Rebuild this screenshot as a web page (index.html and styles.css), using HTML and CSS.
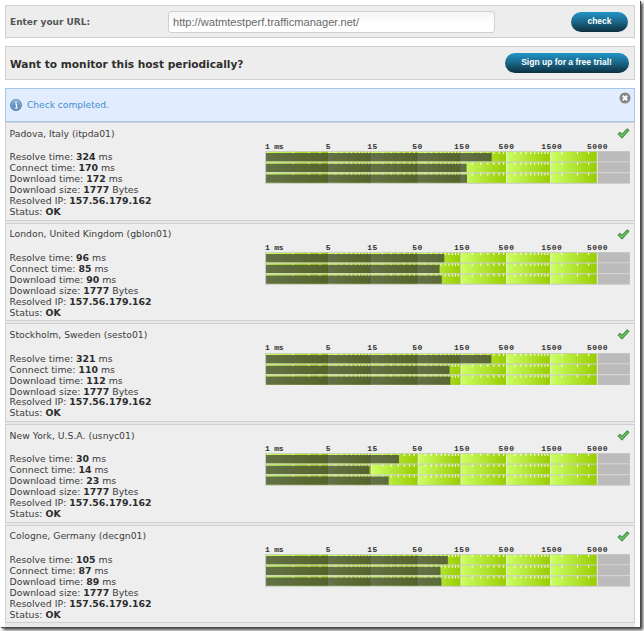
FILE: index.html
```html
<!DOCTYPE html>
<html lang="en">
<head>
<meta charset="utf-8">
<title>Website check</title>
<link rel="stylesheet" href="styles.css">
</head>
<body>
<svg class="defs" aria-hidden="true">
  <defs>
    <linearGradient id="lime"><stop offset="0" stop-color="#ccff66"/><stop offset="1" stop-color="#99cc00"/></linearGradient>
    <linearGradient id="blue" x2="0" y2="1"><stop offset="0" stop-color="#8ab0d8"/><stop offset="1" stop-color="#4478b0"/></linearGradient>
    <symbol id="lane" viewBox="0 0 365 10.8">
      <rect width="365" height="10.8" fill="#bbb"/>
      <g fill="url(#lime)"><rect x="1" width="62.6" height="10.8"/><rect x="63.6" width="42.8" height="10.8"/><rect x="106.4" width="46.8" height="10.8"/><rect x="153.2" width="42.8" height="10.8"/><rect x="196" width="45.5" height="10.8"/><rect x="241.5" width="44" height="10.8"/><rect x="285.5" width="46.5" height="10.8"/></g>
      <path transform="translate(1 0)" d="M27 0v3M42.7 0v3M53.9 0v3M69.7 0v3M75.7 0v3M80.9 0v3M85.5 0v3M89.6 0v3M93.3 0v3M96.7 0v3M99.8 0v3M102.7 0v3M116.6 0v3M125.3 0v3M132.3 0v3M138.3 0v3M143.5 0v3M148.1 0v3M159.3 0v3M165.3 0v3M170.5 0v3M175.1 0v3M179.2 0v3M182.9 0v3M186.3 0v3M189.4 0v3M192.3 0v3M206.2 0v3M214.9 0v3M221.9 0v3M227.9 0v3M233.1 0v3M237.7 0v3M248.9 0v3M254.9 0v3M260.1 0v3M264.7 0v3M268.8 0v3M272.5 0v3M275.9 0v3M279 0v3M281.9 0v3M295.8 0v3M311.5 0v3M322.7 0v3" stroke="#fbfff0" stroke-width="1.1"/>
      <path d="M63.6 0v10.8M106.4 0v10.8M153.2 0v10.8M196 0v10.8M241.5 0v10.8M285.5 0v10.8M332.3 0v10.8" stroke="#e8eedc" stroke-width="1"/>
      <path d="M0 .4h365M.5 0v10.8" stroke="#c8c8c8" stroke-width=".9"/>
    </symbol>
    <symbol id="tick" viewBox="0 0 13 11"><path d="M1.2 6.1 3 4.4l2 2L10.3 1l1.5 1.5L5 9.8z" fill="#78c66c" stroke="#3f9440" stroke-width="1.1" stroke-linejoin="round"/></symbol>
  </defs>
</svg>
<main class="page">
  <form class="bar">
    <label class="bar-label" for="url">Enter your URL:</label>
    <input class="url" id="url" type="text" value="http://watmtestperf.trafficmanager.net/">
    <button class="pill pill-check" type="button">check</button>
  </form>
  <section class="bar bar-trial">
    <h2 class="bar-title">Want to monitor this host periodically?</h2>
    <button class="pill pill-trial" type="button">Sign up for a free trial!</button>
  </section>
  <section class="notice">
    <svg class="info" viewBox="0 0 12 12"><circle cx="6" cy="6" r="5.6" fill="url(#blue)" stroke="#4a78ab" stroke-width=".7"/><circle cx="6" cy="6" r="4.4" fill="none" stroke="#a8c5e2" stroke-width=".5"/><path d="M5 5h1.5v4M4.8 9h3M6 2.5v1.4" fill="none" stroke="#fff" stroke-width="1.2"/></svg>
    <span>Check completed.</span>
    <svg class="close" viewBox="0 0 12 12"><circle cx="6" cy="6" r="5.5" fill="#858585"/><path d="m3.8 3.8 4.4 4.4m0-4.4L3.8 8.2" stroke="#fff" stroke-width="2"/></svg>
  </section>
  <section class="results">
    <article class="result">
      <div class="facts"><h3>Padova, Italy (itpda01)</h3><p>Resolve time: <b>324</b> ms</p><p>Connect time: <b>170</b> ms</p><p>Download time: <b>172</b> ms</p><p>Download size: <b>1777</b> Bytes</p><p>Resolved IP: <b>157.56.179.162</b></p><p>Status: <b>OK</b></p></div>
      <div class="chart"><svg class="tick"><use href="#tick"/></svg><div class="scale"><span>1 ms</span><span>5</span><span>15</span><span>50</span><span>150</span><span>500</span><span>1500</span><span>5000</span></div>
        <svg class="plot" viewBox="0 0 365 32.7"><use href="#lane" width="365" height="10.8"/><use href="#lane" y="10.8" width="365" height="10.8"/><use href="#lane" y="21.6" width="365" height="10.8"/><path class="edge" d="M0 32.3h365"/><path class="time" d="M1 2h225.7v8.2H1zM1 12.8h200.6V21H1zM1 23.6h201v8.2H1z"/></svg></div>
    </article>
    <article class="result">
      <div class="facts"><h3>London, United Kingdom (gblon01)</h3><p>Resolve time: <b>96</b> ms</p><p>Connect time: <b>85</b> ms</p><p>Download time: <b>90</b> ms</p><p>Download size: <b>1777</b> Bytes</p><p>Resolved IP: <b>157.56.179.162</b></p><p>Status: <b>OK</b></p></div>
      <div class="chart"><svg class="tick"><use href="#tick"/></svg><div class="scale"><span>1 ms</span><span>5</span><span>15</span><span>50</span><span>150</span><span>500</span><span>1500</span><span>5000</span></div>
        <svg class="plot" viewBox="0 0 365 32.7"><use href="#lane" width="365" height="10.8"/><use href="#lane" y="10.8" width="365" height="10.8"/><use href="#lane" y="21.6" width="365" height="10.8"/><path class="edge" d="M0 32.3h365"/><path class="time" d="M1 2h178.3v8.2H1zM1 12.8h173.6V21H1zM1 23.6h175.8v8.2H1z"/></svg></div>
    </article>
    <article class="result">
      <div class="facts"><h3>Stockholm, Sweden (sesto01)</h3><p>Resolve time: <b>321</b> ms</p><p>Connect time: <b>110</b> ms</p><p>Download time: <b>112</b> ms</p><p>Download size: <b>1777</b> Bytes</p><p>Resolved IP: <b>157.56.179.162</b></p><p>Status: <b>OK</b></p></div>
      <div class="chart"><svg class="tick"><use href="#tick"/></svg><div class="scale"><span>1 ms</span><span>5</span><span>15</span><span>50</span><span>150</span><span>500</span><span>1500</span><span>5000</span></div>
        <svg class="plot" viewBox="0 0 365 32.7"><use href="#lane" width="365" height="10.8"/><use href="#lane" y="10.8" width="365" height="10.8"/><use href="#lane" y="21.6" width="365" height="10.8"/><path class="edge" d="M0 32.3h365"/><path class="time" d="M1 2h225.3v8.2H1zM1 12.8h183.6V21H1zM1 23.6h184.3v8.2H1z"/></svg></div>
    </article>
    <article class="result">
      <div class="facts"><h3>New York, U.S.A. (usnyc01)</h3><p>Resolve time: <b>30</b> ms</p><p>Connect time: <b>14</b> ms</p><p>Download time: <b>23</b> ms</p><p>Download size: <b>1777</b> Bytes</p><p>Resolved IP: <b>157.56.179.162</b></p><p>Status: <b>OK</b></p></div>
      <div class="chart"><svg class="tick"><use href="#tick"/></svg><div class="scale"><span>1 ms</span><span>5</span><span>15</span><span>50</span><span>150</span><span>500</span><span>1500</span><span>5000</span></div>
        <svg class="plot" viewBox="0 0 365 32.7"><use href="#lane" width="365" height="10.8"/><use href="#lane" y="10.8" width="365" height="10.8"/><use href="#lane" y="21.6" width="365" height="10.8"/><path class="edge" d="M0 32.3h365"/><path class="time" d="M1 2h133v8.2H1zM1 12.8h103.4V21H1zM1 23.6h122.7v8.2H1z"/></svg></div>
    </article>
    <article class="result">
      <div class="facts"><h3>Cologne, Germany (decgn01)</h3><p>Resolve time: <b>105</b> ms</p><p>Connect time: <b>87</b> ms</p><p>Download time: <b>89</b> ms</p><p>Download size: <b>1777</b> Bytes</p><p>Resolved IP: <b>157.56.179.162</b></p><p>Status: <b>OK</b></p></div>
      <div class="chart"><svg class="tick"><use href="#tick"/></svg><div class="scale"><span>1 ms</span><span>5</span><span>15</span><span>50</span><span>150</span><span>500</span><span>1500</span><span>5000</span></div>
        <svg class="plot" viewBox="0 0 365 32.7"><use href="#lane" width="365" height="10.8"/><use href="#lane" y="10.8" width="365" height="10.8"/><use href="#lane" y="21.6" width="365" height="10.8"/><path class="edge" d="M0 32.3h365"/><path class="time" d="M1 2h181.8v8.2H1zM1 12.8h174.5V21H1zM1 23.6h175.4v8.2H1z"/></svg></div>
    </article>
  </section>
</main>
</body>
</html>
```
FILE: styles.css
```css
* { box-sizing: border-box; }
html { background: #fff; overflow: hidden; }
body { margin: 0; width: 644px; height: 631px; overflow: hidden; font-family: "DejaVu Sans", sans-serif; color: #3c3c3c; }
h2, h3, p { margin: 0; }
.defs { display: block; width: 0; height: 0; }
.page { width: 640px; height: 627px; padding: 5px 5px 0; background: #fff; box-shadow: 1px 1px 0 #484848, 3px 3px 3px #444; overflow: hidden; }
.bar { display: flex; align-items: center; height: 33px; padding: 0 6px 0 4px; border: 1px solid #cfcfcf; background: #ededed; }
.bar-trial { margin-top: 8px; height: 34px; padding-right: 5.5px; }
.bar-label { width: 158px; font-size: 9px; font-weight: bold; color: #555; }
.bar-title { font-size: 10.6px; line-height: 14px; color: #2e2e2e; white-space: nowrap; padding-top: 1px; }
.url { width: 327px; height: 22px; padding: 0 4px; border: 1px solid #d0d0d0; border-radius: 3px; background: linear-gradient(#f5f5f5, #fff 60%); color: #686868; font: 11.1px "Liberation Sans", sans-serif; }
.pill { height: 20px; margin-left: auto; padding: 0 0 2px; border: 0; border-radius: 10px; background: linear-gradient(#2195c8, #1b6586 50%, #0b2f40); color: #fff; font: bold 8.5px "Liberation Sans", sans-serif; white-space: nowrap; }
.pill-check { width: 57px; }
.pill-trial { width: 124px; }
.notice { display: flex; align-items: center; height: 34px; margin-top: 8px; padding: 0 3px 0 4px; border: 1px solid #a3c8ee; background: #e1edfe; color: #3f8cce; font-size: 9.1px; }
.info { width: 12px; height: 12px; margin-right: 5px; }
.close { width: 12px; height: 12px; margin: 0 0 15px auto; }
.results { display: flex; flex-direction: column; gap: 2px; height: 510px; background: #e8e8e8; }
.result { display: flex; height: 98.7px; flex: none; border: 1px solid #cfcfcf; background: #eee; }
.facts { width: 259px; padding: 4.6px 0 0 3.6px; font-size: 9.35px; line-height: 10.95px; }
.facts h3 { margin-bottom: 13.7px; font-size: 9.25px; font-weight: normal; line-height: 11px; }
.facts b { color: #2c2c2c; }
.chart { display: flex; flex-direction: column; width: 365px; padding-top: 5px; }
.tick { width: 13px; height: 11px; margin-left: auto; }
.scale { display: grid; grid-template-columns: 42px 43px 45px 45px 44px 45px 45.5px 46px; height: 9px; margin-top: 3px; font: bold 8px/9px "Liberation Mono", monospace; letter-spacing: .5px; color: #333; text-align: center; white-space: nowrap; }
.scale span:first-child { text-align: left; letter-spacing: -.2px; }
.plot { width: 365px; height: 32.7px; margin-top: .3px; }
.edge { stroke: #c8c8c8; stroke-width: .9; }
.time { fill: #3a3a3a; fill-opacity: .72; }
```
